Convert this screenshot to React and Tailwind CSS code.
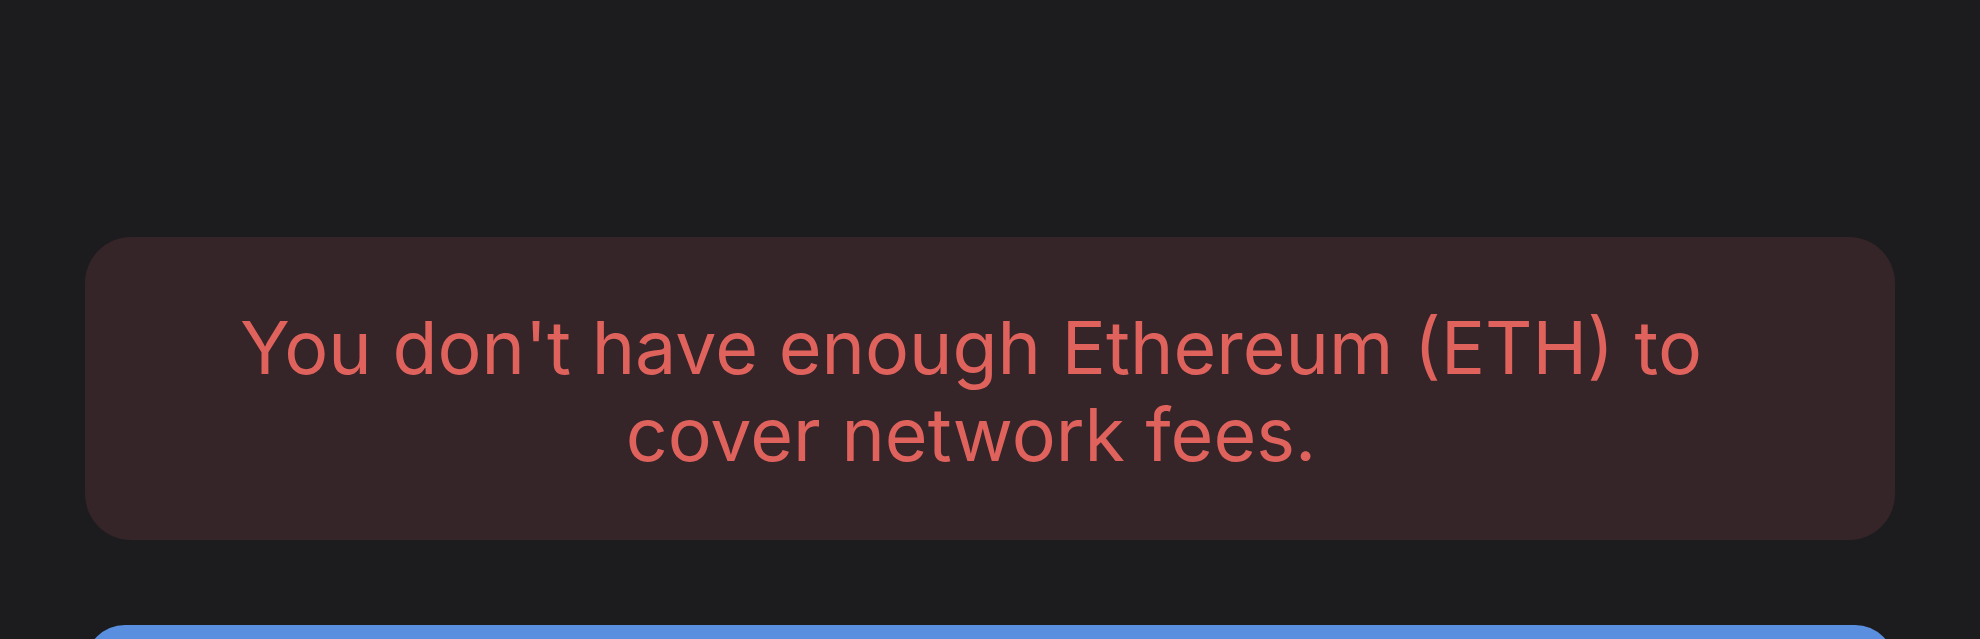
export default function App() {
  return (
    <div
      className="h-[639px] overflow-hidden bg-[#1c1c1e] px-[85px] pt-[237px]"
      style={{ fontFamily: "Inter, 'Noto Sans', sans-serif" }}
    >
      <div className="flex h-[303px] items-center justify-center rounded-[46px] bg-[#352528] pl-[106px] pr-[144px]">
        <p className="pt-[4px] text-center text-[73.5px] leading-[87px] text-[#e0625d]">
          You don't have enough Ethereum (ETH) to cover network fees.
        </p>
      </div>
      <button className="mt-[85px] h-[80px] w-full rounded-[48px] bg-[#5a8fdf]" />
    </div>
  );
}
